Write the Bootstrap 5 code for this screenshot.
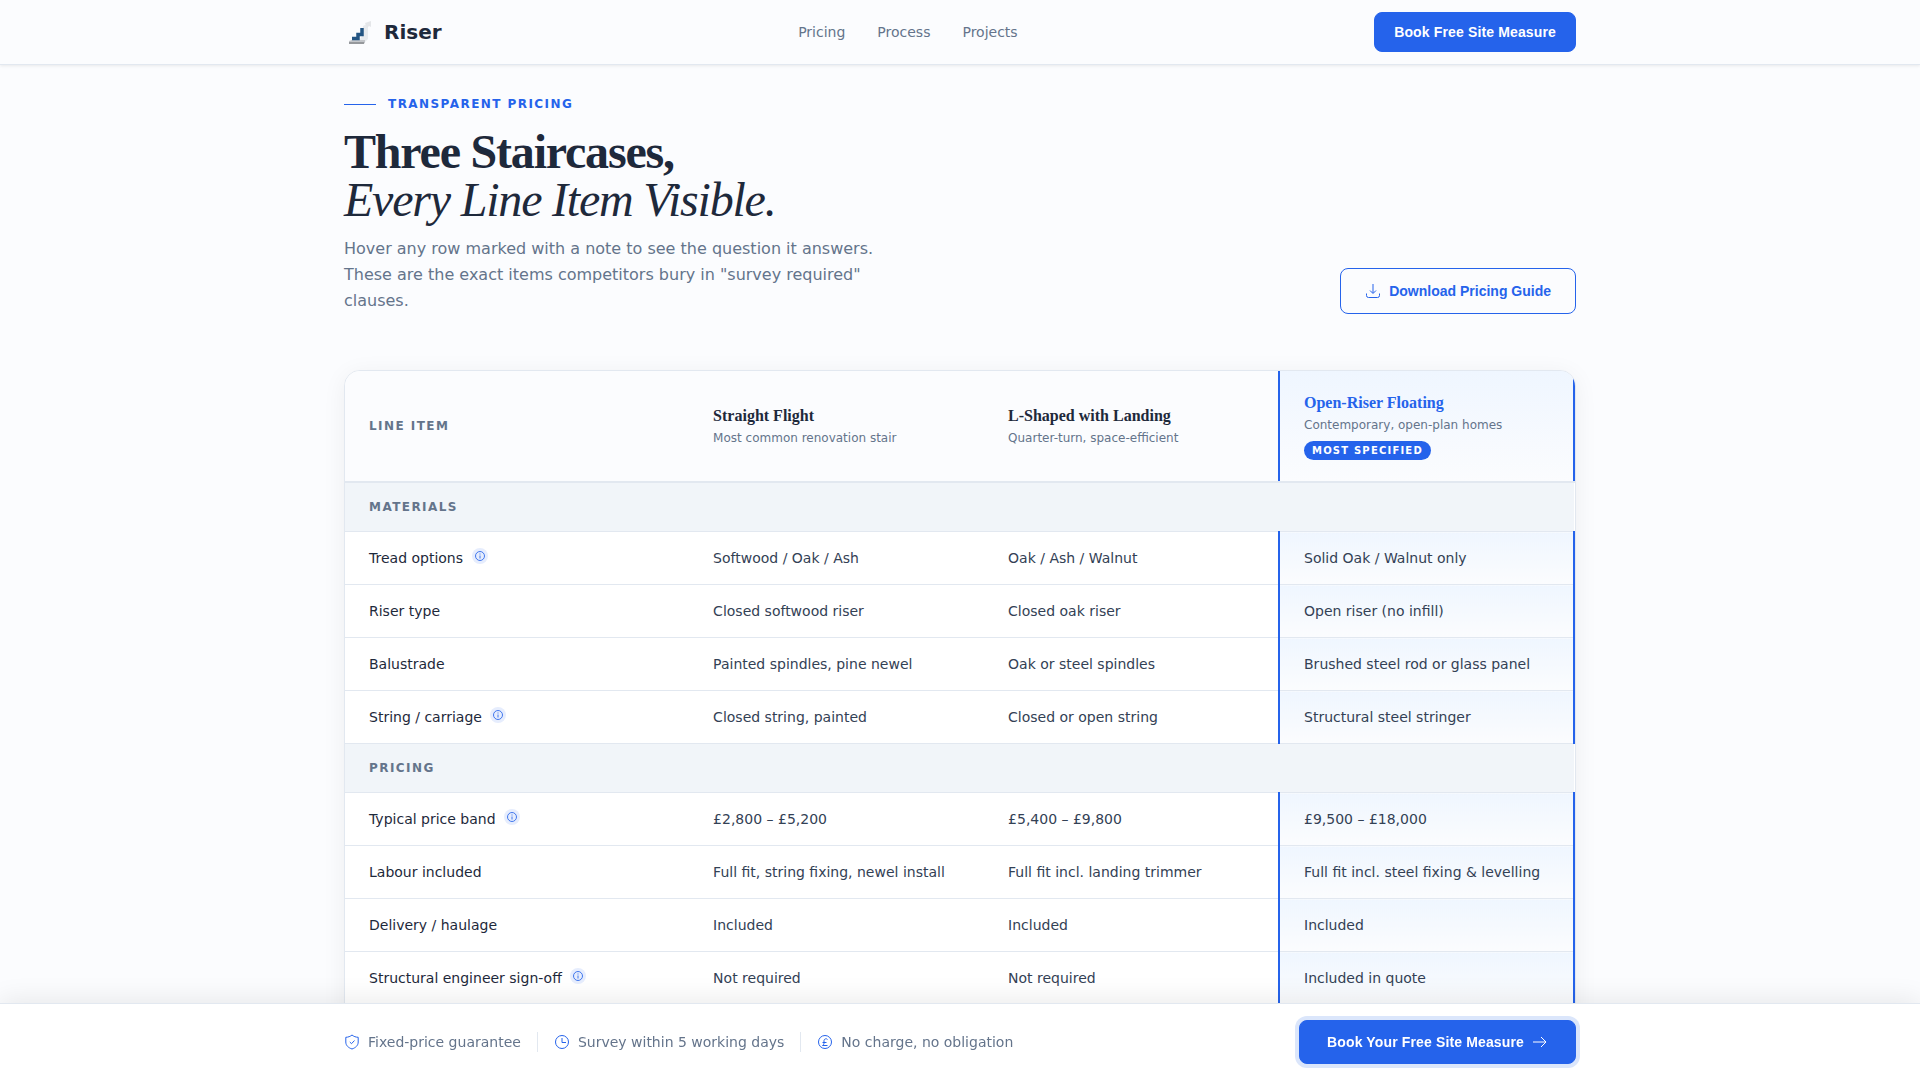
<!DOCTYPE html>
<html lang="en">
<head>
<meta charset="utf-8">
<meta name="viewport" content="width=device-width, initial-scale=1">
<title>Riser – Transparent Pricing</title>
<link href="https://cdn.jsdelivr.net/npm/bootstrap@5.3.0/dist/css/bootstrap.min.css" rel="stylesheet">
<style>
:root{--ink:#1e293b;--muted:#64748b;--brand:#2563eb;--line:#e2e8f0;--paper:#fbfcfe}
body{font-family:"DejaVu Sans",sans-serif;font-size:14px;line-height:20px;color:var(--ink);background:var(--paper);padding-bottom:77px;overflow-x:hidden}
.wrap{width:100%;max-width:1280px;margin:0 auto;padding:0 24px}
.site-head{background:var(--paper);border-bottom:1px solid var(--line);box-shadow:0 1px 3px rgba(0,0,0,.08)}
.site-head .wrap{height:64px}
.brand{font-size:20px;font-weight:700;line-height:28px;color:var(--ink);text-decoration:none;gap:12px}
.menu{gap:32px}
.menu a{color:var(--muted);text-decoration:none}
.btn{font-family:"Liberation Sans",sans-serif;font-size:14px;font-weight:700;line-height:20px;border-radius:8px}
.btn-primary{--bs-btn-bg:#2563eb;--bs-btn-border-color:#2563eb;letter-spacing:.01em}
.btn-head{padding:9px 19px}
.btn-guide{--bs-btn-color:#2563eb;--bs-btn-border-color:#2563eb;padding:12px 24px;gap:8px}
.btn-final{padding:11px 27px;gap:8px;box-shadow:0 0 0 4px #dbe6fb}
.hero{padding-top:28px;padding-bottom:56px}
.eyebrow{font-size:12px;font-weight:700;letter-spacing:.12em;color:var(--brand);line-height:23px;gap:12px;margin-bottom:12px}
.eyebrow::before{content:"";width:32px;height:1px;background:var(--brand)}
.headline{font-family:"Liberation Serif",serif;font-size:48px;line-height:48px;font-weight:700;letter-spacing:-.025em;margin:0 0 12px}
.headline em{font-weight:400}
.intro{font-size:16px;line-height:26px;color:var(--muted);max-width:560px;margin:0}
.sheet{background:#fff;border:1px solid var(--line);border-radius:16px;overflow:hidden;box-shadow:0 4px 24px rgba(15,23,42,.06);padding-bottom:24px}
.sheet table{width:100%;table-layout:fixed;border-collapse:collapse}
.sheet th,.sheet td{padding:16px 24px;border-bottom:1px solid var(--line);vertical-align:middle}
.sheet th{font-weight:400}
.sheet td{color:#334155}
.sheet thead th{background:var(--paper);border-bottom:2px solid var(--line);padding:20px 24px 21px}
.sheet thead th:first-child,.sheet .group th{font-size:12px;font-weight:700;letter-spacing:.12em;color:var(--muted)}
.sheet .group th{background:#f1f5f9;padding:14px 24px}
.sheet th:nth-child(4),.sheet td:nth-child(4){border-left:2px solid var(--brand);border-right:2px solid var(--brand);background:linear-gradient(#eff6ff,#fbfcfe)}
.stair-name{display:block;font-family:"Liberation Serif",serif;font-size:16px;font-weight:700;line-height:24px}
.stair-top{color:var(--brand)}
.stair-note{display:block;font-size:12px;line-height:20px;color:var(--muted)}
.pick{display:inline-block;background:var(--brand);color:#fff;border-radius:10px;font-size:10px;font-weight:700;letter-spacing:.12em;line-height:13px;padding:3px 8px;margin-top:6px}
.hint{display:inline-flex;align-items:center;justify-content:center;width:16px;height:16px;border:0;border-radius:50%;background:#e6edfd;color:var(--brand);padding:0;margin-left:4px;vertical-align:2px}
.hint svg{opacity:.85}
.dock{border-top:1px solid var(--line);background:#fff;box-shadow:0 -4px 24px rgba(0,0,0,.08)}
.dock .wrap{height:76px}
.promise{gap:8px;color:var(--muted);padding-right:16px}
.promise+.promise{border-left:1px solid var(--line);padding-left:16px}
svg{display:block;flex:none}
.promise svg{color:var(--brand)}
</style>
</head>
<body>
<header class="site-head">
  <div class="wrap d-flex align-items-center justify-content-between">
    <a class="brand d-flex align-items-center" href="#">
      <svg width="28" height="28" viewBox="0 0 28 28" aria-hidden="true"><path d="M16 21l3-4V8l4-2 1 2v13l-3 3h-6z" fill="#e8ebee"/><path d="M21 5l6-2v6l-2-1-2 2z" fill="#e4e6e9"/><path d="M5 23l3-1h13v3l-2 1H5z" fill="#c3c6ca"/><path d="M5 25h15" stroke="#95989c" stroke-width="2"/><path d="M8 20.500h6v-4h4V10" fill="none" stroke="#235583" stroke-width="3.500"/></svg>
      <span>Riser</span>
    </a>
    <nav class="menu d-flex" aria-label="Main"><a href="#pricing">Pricing</a><a href="#process">Process</a><a href="#projects">Projects</a></nav>
    <button type="button" class="btn btn-primary btn-head">Book Free Site Measure</button>
  </div>
</header>
<main class="wrap">
  <section class="hero d-flex align-items-end justify-content-between">
    <div>
      <div class="eyebrow d-flex align-items-center">TRANSPARENT PRICING</div>
      <h1 class="headline">Three Staircases,<br><em>Every Line Item Visible.</em></h1>
      <p class="intro">Hover any row marked with a note to see the question it answers. These are the exact items competitors bury in "survey required" clauses.</p>
    </div>
    <button type="button" class="btn btn-outline-primary btn-guide d-flex align-items-center">
      <svg width="16" height="16" viewBox="0 0 16 16" fill="none" stroke="currentColor" aria-hidden="true"><path d="M8 1v9M5 7.500l3 3 3-3M1.500 10.500v2a2 2 0 0 0 2 2h9a2 2 0 0 0 2-2v-2"/></svg>
      Download Pricing Guide
    </button>
  </section>
  <section class="sheet" id="pricing">
    <table>
      <colgroup><col style="width:28%"><col style="width:24%"><col style="width:24%"><col style="width:24%"></colgroup>
      <thead><tr>
        <th scope="col">LINE ITEM</th>
        <th scope="col"><span class="stair-name">Straight Flight</span><span class="stair-note">Most common renovation stair</span></th>
        <th scope="col"><span class="stair-name">L-Shaped with Landing</span><span class="stair-note">Quarter-turn, space-efficient</span></th>
        <th scope="col"><span class="stair-name stair-top">Open-Riser Floating</span><span class="stair-note">Contemporary, open-plan homes</span><span class="pick">MOST SPECIFIED</span></th>
      </tr></thead>
      <tbody>
        <tr class="group"><th colspan="4" scope="colgroup">MATERIALS</th></tr>
        <tr><th scope="row">Tread options <button type="button" class="hint" aria-label="About tread options"><svg width="10" height="10" viewBox="0 0 10 10" fill="none" stroke="currentColor"><circle cx="5" cy="5" r="4.500"/><path d="M5 4.500v3M5 2.500v1"/></svg></button></th><td>Softwood / Oak / Ash</td><td>Oak / Ash / Walnut</td><td>Solid Oak / Walnut only</td></tr>
        <tr><th scope="row">Riser type</th><td>Closed softwood riser</td><td>Closed oak riser</td><td>Open riser (no infill)</td></tr>
        <tr><th scope="row">Balustrade</th><td>Painted spindles, pine newel</td><td>Oak or steel spindles</td><td>Brushed steel rod or glass panel</td></tr>
        <tr><th scope="row">String / carriage <button type="button" class="hint" aria-label="About string and carriage"><svg width="10" height="10" viewBox="0 0 10 10" fill="none" stroke="currentColor"><circle cx="5" cy="5" r="4.500"/><path d="M5 4.500v3M5 2.500v1"/></svg></button></th><td>Closed string, painted</td><td>Closed or open string</td><td>Structural steel stringer</td></tr>
        <tr class="group"><th colspan="4" scope="colgroup">PRICING</th></tr>
        <tr><th scope="row">Typical price band <button type="button" class="hint" aria-label="About typical price band"><svg width="10" height="10" viewBox="0 0 10 10" fill="none" stroke="currentColor"><circle cx="5" cy="5" r="4.500"/><path d="M5 4.500v3M5 2.500v1"/></svg></button></th><td>£2,800 – £5,200</td><td>£5,400 – £9,800</td><td>£9,500 – £18,000</td></tr>
        <tr><th scope="row">Labour included</th><td>Full fit, string fixing, newel install</td><td>Full fit incl. landing trimmer</td><td>Full fit incl. steel fixing &amp; levelling</td></tr>
        <tr><th scope="row">Delivery / haulage</th><td>Included</td><td>Included</td><td>Included</td></tr>
        <tr><th scope="row">Structural engineer sign-off <button type="button" class="hint" aria-label="About structural engineer sign-off"><svg width="10" height="10" viewBox="0 0 10 10" fill="none" stroke="currentColor"><circle cx="5" cy="5" r="4.500"/><path d="M5 4.500v3M5 2.500v1"/></svg></button></th><td>Not required</td><td>Not required</td><td>Included in quote</td></tr>
      </tbody>
    </table>
  </section>
</main>
<footer class="dock fixed-bottom">
  <div class="wrap d-flex align-items-center justify-content-between">
    <div class="d-flex">
      <div class="promise d-flex align-items-center"><svg width="16" height="16" viewBox="0 0 16 16" fill="none" stroke="currentColor" aria-hidden="true"><path d="M8 1c1.800 1.500 3.800 2.200 6.200 2.300V8c0 3.500-2.500 5.700-6.200 7C4.300 13.700 1.800 11.500 1.800 8V3.300C4.200 3.200 6.200 2.500 8 1zM5.800 8l1.700 1.700L10.500 6.500"/></svg>Fixed-price guarantee</div>
      <div class="promise d-flex align-items-center"><svg width="16" height="16" viewBox="0 0 16 16" fill="none" stroke="currentColor" aria-hidden="true"><circle cx="8" cy="8" r="6.500"/><path d="M8 4v4.500h4"/></svg>Survey within 5 working days</div>
      <div class="promise d-flex align-items-center"><svg width="16" height="16" viewBox="0 0 16 16" fill="none" stroke="currentColor" aria-hidden="true"><circle cx="8" cy="8" r="6.500"/><path d="M10.500 5.500A2 2 0 0 0 7 6.500V9c0 1-.5 2-1.500 2.500h5M5.500 8.500h4"/></svg>No charge, no obligation</div>
    </div>
    <button type="button" class="btn btn-primary btn-final d-flex align-items-center">Book Your Free Site Measure
      <svg width="16" height="16" viewBox="0 0 16 16" fill="none" stroke="currentColor" aria-hidden="true"><path d="M1 8h13M9 3l5 5-5 5"/></svg>
    </button>
  </div>
</footer>
<script src="https://cdn.jsdelivr.net/npm/bootstrap@5.3.0/dist/js/bootstrap.bundle.min.js"></script>
</body>
</html>
